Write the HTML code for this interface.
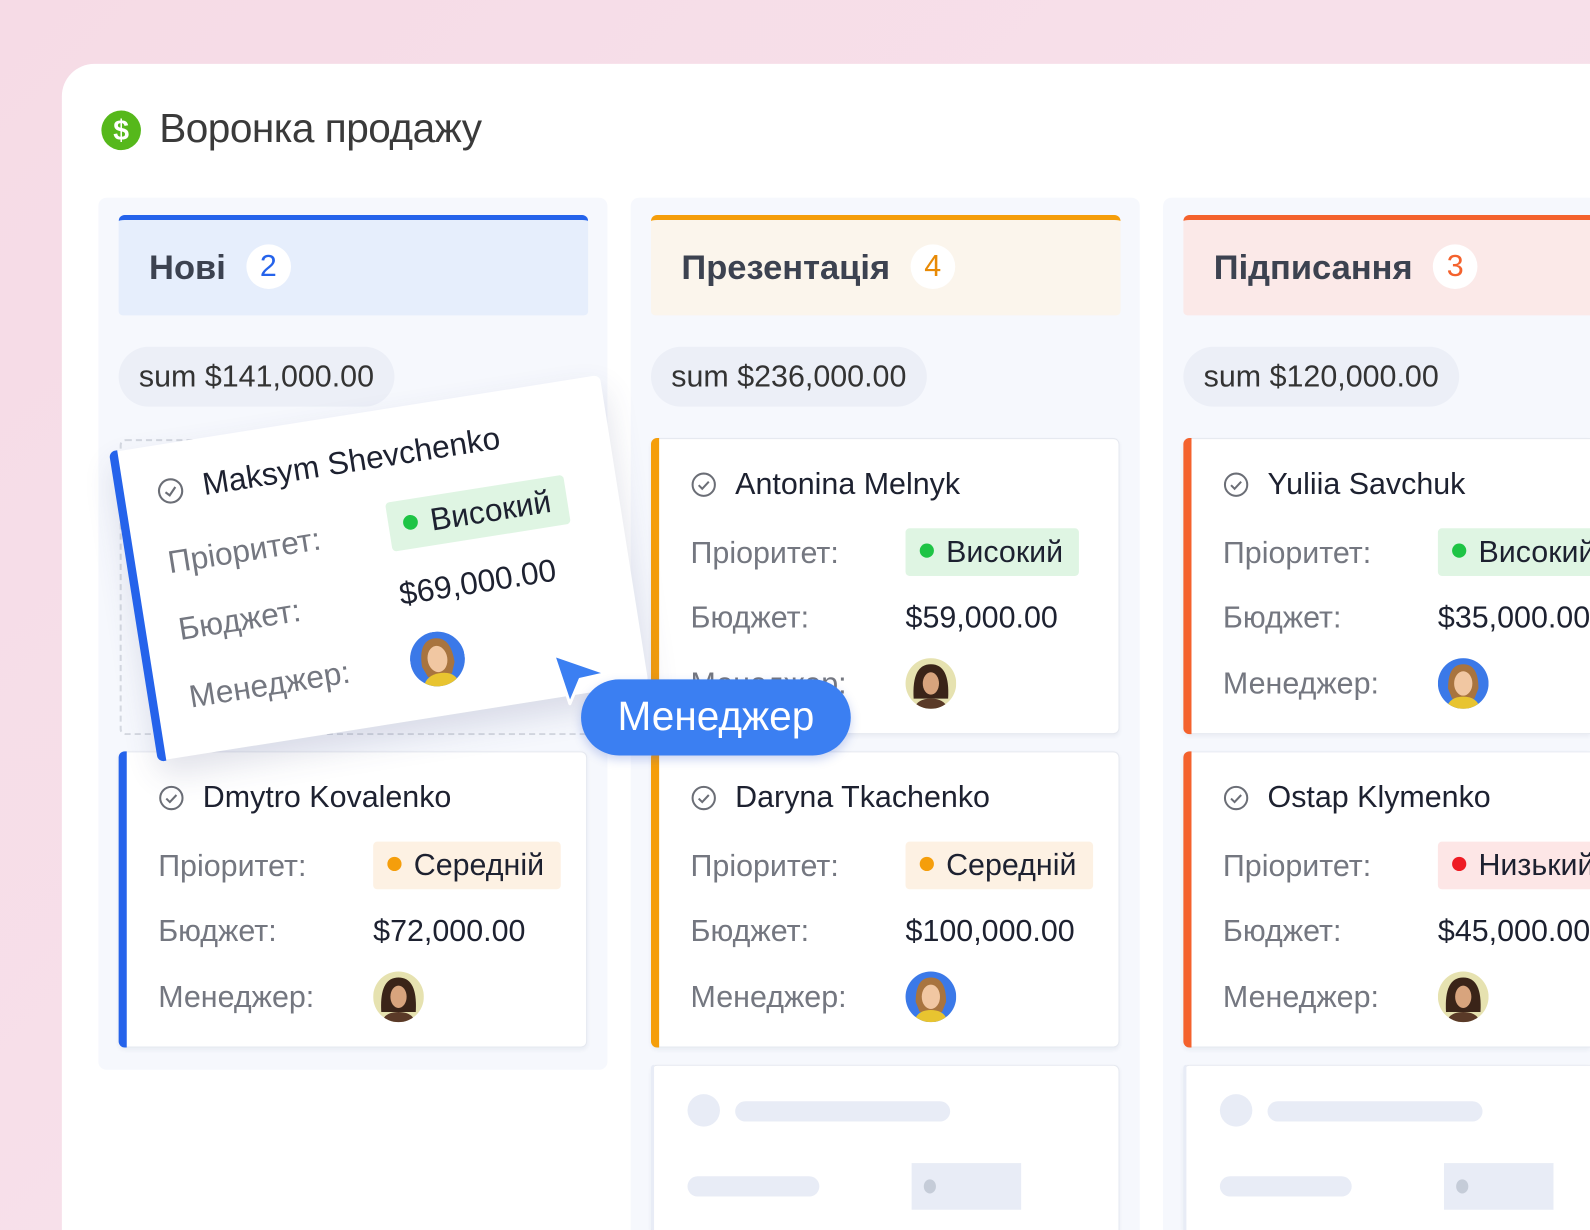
<!DOCTYPE html>
<html style="overflow:hidden;width:1590px;height:1230px"><head><meta charset="utf-8"><style>
*{box-sizing:border-box;margin:0;padding:0}
body{width:1590px;height:1230px;overflow:hidden;position:relative;font-family:"Liberation Sans","Noto Sans CJK SC",sans-serif;background:linear-gradient(135deg,#f6dbe6 0%,#f7e0ea 50%,#f5dde8 100%)}
#clip{position:absolute;left:0;top:0;width:1590px;height:1230px;overflow:hidden}
#s{position:absolute;left:0;top:0;width:1568px;height:1213px;transform:scale(1.01403);transform-origin:0 0;overflow:hidden}
.panel{position:absolute;left:61px;top:63px;width:1507px;height:1150px;background:#fff;border-radius:32px 0 0 0}
.title{position:absolute;left:157px;top:105px;font-size:40px;color:#3a3a3a;letter-spacing:-0.5px}
.dollar{position:absolute;left:100px;top:109px;width:39px;height:39px;border-radius:50%;background:#56b81b;color:#fff;font-weight:bold;font-size:28px;text-align:center;line-height:39px}
.col{position:absolute;top:195px;width:502px;height:860px;background:#f6f8fd;border-radius:8px}
.hdr{position:absolute;top:212px;width:463px;height:99px;border-top:5px solid;border-radius:6px 6px 4px 4px;font-size:34px;font-weight:bold;color:#3c4250;padding-left:30px;line-height:94px}
.cnt{display:inline-block;width:44px;height:44px;border-radius:50%;background:#fff;text-align:center;line-height:44px;font-weight:normal;font-size:30px;margin-left:20px;vertical-align:middle;position:relative;top:-3px}
.sum{position:absolute;top:342px;height:59px;border-radius:30px;background:#eceff7;font-size:30px;color:#333;line-height:59px;padding:0 20px}
.card{position:absolute;width:462px;height:292px;background:#fff;border-radius:6px;border:1px solid #e6e9f0;box-shadow:0 2px 4px rgba(40,50,90,.06)}
.card .bar{position:absolute;left:-1px;top:-1px;bottom:-1px;width:8px;border-radius:6px 0 0 6px}
.nm{position:absolute;left:82px;top:28px;font-size:30px;color:#1d2130}
.chk{position:absolute;left:38px;top:32px;width:26px;height:26px}
.lb{position:absolute;left:38px;font-size:30px;color:#747780}
.val{position:absolute;left:250px;font-size:30px;color:#1d2130}
.badge{position:absolute;left:250px;top:88px;height:47px;padding:0 16px 0 14px;border-radius:4px;font-size:30px;color:#1d2130;line-height:47px;white-space:nowrap}
.badge i{display:inline-block;width:14px;height:14px;border-radius:50%;margin-right:12px;vertical-align:middle;position:relative;top:-3px}
.av{position:absolute;left:250px;top:216px;width:50px;height:50px}
.ph{position:absolute;background:#e8ecf6;border-radius:14px}
</style></head><body>
<svg width="0" height="0" style="position:absolute">
<defs>
<symbol id="avA" viewBox="0 0 50 50"><clipPath id="ca"><circle cx="25" cy="25" r="25"/></clipPath><g clip-path="url(#ca)"><rect width="50" height="50" fill="#3b79e8"/><path d="M10 30 Q10 6 25 6 Q40 6 40 30 L36 40 L14 40Z" fill="#a8743f"/><ellipse cx="25" cy="25" rx="9" ry="12" fill="#f1c7a2"/><path d="M8 52 Q10 38 25 38 Q40 38 42 52Z" fill="#e8c430"/></g></symbol>
<symbol id="avB" viewBox="0 0 50 50"><clipPath id="cb"><circle cx="25" cy="25" r="25"/></clipPath><g clip-path="url(#cb)"><rect width="50" height="50" fill="#e6e2b0"/><path d="M8 40 Q6 6 25 6 Q44 6 42 40Z" fill="#3a2418"/><ellipse cx="25" cy="25" rx="8" ry="11" fill="#d8a47d"/><path d="M8 52 Q10 40 25 40 Q40 40 42 52Z" fill="#5a3a28"/></g></symbol>
<symbol id="chk" viewBox="0 0 26 26"><circle cx="13" cy="13" r="11" fill="none" stroke="#6b6e76" stroke-width="2"/><path d="M8 13.5l3.5 3.5 6.5-7" fill="none" stroke="#6b6e76" stroke-width="2"/></symbol>
</defs></svg>
<div id="clip"><div id="s">
<div class="panel"></div>
<div class="dollar">$</div>
<div class="title">Воронка продажу</div>

<div class="col" style="left:97px"></div>
<div class="col" style="left:622px;height:1018px;border-radius:8px 8px 0 0"></div>
<div class="col" style="left:1147px;height:1018px;width:421px;border-radius:8px 0 0 0"></div>

<div class="hdr" style="left:117px;border-color:#2563eb;background:#e6eefc">Нові<span class="cnt" style="color:#2563eb">2</span></div>
<div class="hdr" style="left:642px;border-color:#f59e0b;background:#fbf5ec">Презентація<span class="cnt" style="color:#e88a05">4</span></div>
<div class="hdr" style="left:1167px;width:401px;border-radius:6px 0 0 4px;border-color:#f4622d;background:#fbe9e8">Підписання<span class="cnt" style="color:#f4622d">3</span></div>

<div class="sum" style="left:117px">sum $141,000.00</div>
<div class="sum" style="left:642px">sum $236,000.00</div>
<div class="sum" style="left:1167px">sum $120,000.00</div>

<div style="position:absolute;left:118px;top:433px;width:480px;height:292px;border:2px dashed #d4d8e0;border-radius:6px"></div>
<div class="card" style="left:117px;top:741px"><div class="bar" style="background:#2563eb"></div>
<svg class="chk"><use href="#chk"/></svg><div class="nm">Dmytro Kovalenko</div>
<div class="lb" style="top:96px">Пріоритет:</div><div class="badge" style="background:#fdf1e3"><i style="background:#f59e0b"></i>Середній</div>
<div class="lb" style="top:160px">Бюджет:</div><div class="val" style="top:160px">$72,000.00</div>
<div class="lb" style="top:225px">Менеджер:</div><svg class="av"><use href="#avB"/></svg></div>

<div class="card" style="left:642px;top:432px"><div class="bar" style="background:#f59e0b"></div>
<svg class="chk"><use href="#chk"/></svg><div class="nm">Antonina Melnyk</div>
<div class="lb" style="top:96px">Пріоритет:</div><div class="badge" style="background:#dff5e3"><i style="background:#1ec445"></i>Високий</div>
<div class="lb" style="top:160px">Бюджет:</div><div class="val" style="top:160px">$59,000.00</div>
<div class="lb" style="top:225px">Менеджер:</div><svg class="av"><use href="#avB"/></svg></div>
<div class="card" style="left:642px;top:741px"><div class="bar" style="background:#f59e0b"></div>
<svg class="chk"><use href="#chk"/></svg><div class="nm">Daryna Tkachenko</div>
<div class="lb" style="top:96px">Пріоритет:</div><div class="badge" style="background:#fdf1e3"><i style="background:#f59e0b"></i>Середній</div>
<div class="lb" style="top:160px">Бюджет:</div><div class="val" style="top:160px">$100,000.00</div>
<div class="lb" style="top:225px">Менеджер:</div><svg class="av"><use href="#avA"/></svg></div>
<div class="card" style="left:642px;top:1050px;height:163px;border-bottom:none;border-radius:6px 6px 0 0"><div class="bar" style="background:#e8ecf6;width:3px"></div>
<div class="ph" style="left:35px;top:28px;width:32px;height:32px;border-radius:50%"></div>
<div class="ph" style="left:82px;top:35px;width:212px;height:20px"></div>
<div class="ph" style="left:35px;top:109px;width:130px;height:20px"></div>
<div class="ph" style="left:256px;top:96px;width:108px;height:46px;border-radius:0"><div style="position:absolute;left:12px;top:16px;width:12px;height:14px;border-radius:50%;background:#c5ccd8"></div></div></div>

<div class="card" style="left:1167px;top:432px;width:401px;border-right:none;border-radius:6px 0 0 6px"><div class="bar" style="background:#f4622d"></div>
<svg class="chk"><use href="#chk"/></svg><div class="nm">Yuliia Savchuk</div>
<div class="lb" style="top:96px">Пріоритет:</div><div class="badge" style="background:#dff5e3"><i style="background:#1ec445"></i>Високий</div>
<div class="lb" style="top:160px">Бюджет:</div><div class="val" style="top:160px">$35,000.00</div>
<div class="lb" style="top:225px">Менеджер:</div><svg class="av"><use href="#avA"/></svg></div>
<div class="card" style="left:1167px;top:741px;width:401px;border-right:none;border-radius:6px 0 0 6px"><div class="bar" style="background:#f4622d"></div>
<svg class="chk"><use href="#chk"/></svg><div class="nm">Ostap Klymenko</div>
<div class="lb" style="top:96px">Пріоритет:</div><div class="badge" style="background:#fde6e6"><i style="background:#ee1c24"></i>Низький</div>
<div class="lb" style="top:160px">Бюджет:</div><div class="val" style="top:160px">$45,000.00</div>
<div class="lb" style="top:225px">Менеджер:</div><svg class="av"><use href="#avB"/></svg></div>
<div class="card" style="left:1167px;top:1050px;height:163px;width:401px;border-right:none;border-bottom:none;border-radius:6px 0 0 0"><div class="bar" style="background:#e8ecf6;width:3px"></div>
<div class="ph" style="left:35px;top:28px;width:32px;height:32px;border-radius:50%"></div>
<div class="ph" style="left:82px;top:35px;width:212px;height:20px"></div>
<div class="ph" style="left:35px;top:109px;width:130px;height:20px"></div>
<div class="ph" style="left:256px;top:96px;width:108px;height:46px;border-radius:0"><div style="position:absolute;left:12px;top:16px;width:12px;height:14px;border-radius:50%;background:#c5ccd8"></div></div></div>

<div class="card" style="left:139px;top:412px;width:470px;height:296px;transform:rotate(-9deg) scale(1.04);box-shadow:0 14px 30px rgba(60,70,120,.16);border:none"><div class="bar" style="background:#2563eb"></div>
<svg class="chk"><use href="#chk"/></svg><div class="nm">Maksym Shevchenko</div>
<div class="lb" style="top:96px">Пріоритет:</div><div class="badge" style="background:#dff5e3"><i style="background:#1ec445"></i>Високий</div>
<div class="lb" style="top:160px">Бюджет:</div><div class="val" style="top:160px">$69,000.00</div>
<div class="lb" style="top:225px">Менеджер:</div><svg class="av" style="width:52px;height:52px"><use href="#avA"/></svg></div>

<svg style="position:absolute;left:540px;top:640px" width="64" height="60"><path d="M6 6 L58 24 L32 30 L22 54 Z" fill="#3b7ff2" stroke="#fff" stroke-width="3" stroke-linejoin="round"/></svg>
<div style="position:absolute;left:573px;top:670px;width:266px;height:75px;border-radius:38px;background:#3b7ff2;color:#fff;font-size:40px;text-align:center;line-height:75px;box-shadow:0 4px 10px rgba(40,80,200,.25)">Менеджер</div>
</div></div>
</body></html>
